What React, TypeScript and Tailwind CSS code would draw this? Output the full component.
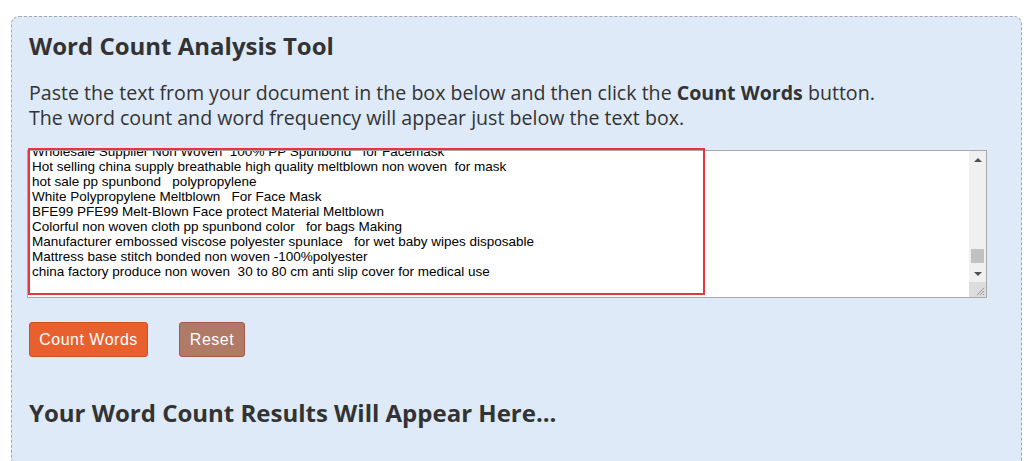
import React from 'react'

const lines = [
  'Wholesale Supplier Non Woven  100% PP Spunbond   for Facemask',
  'Hot selling china supply breathable high quality meltblown non woven  for mask',
  'hot sale pp spunbond   polypropylene',
  'White Polypropylene Meltblown   For Face Mask',
  'BFE99 PFE99 Melt-Blown Face protect Material Meltblown',
  'Colorful non woven cloth pp spunbond color   for bags Making',
  'Manufacturer embossed viscose polyester spunlace   for wet baby wipes disposable',
  'Mattress base stitch bonded non woven -100%polyester',
  'china factory produce non woven  30 to 80 cm anti slip cover for medical use',
]

const heading = "font-['Trebuchet_MS','Open_Sans',sans-serif]"

const FakeScrollbar: React.FC = () => (
  <div className="flex w-[17px] shrink-0 flex-col bg-[#f0f0f0]">
    <div className="flex h-[17px] items-center justify-center">
      <div className="h-0 w-0 border-x-[4px] border-b-[4px] border-x-transparent border-b-[#505050]" />
    </div>
    <div className="flex flex-1 flex-col justify-end px-[2px] pb-[2px]">
      <div className="h-[14px] bg-[#c1c1c1]" />
    </div>
    <div className="flex h-[17px] items-center justify-center">
      <div className="h-0 w-0 border-x-[4px] border-t-[4px] border-x-transparent border-t-[#505050]" />
    </div>
    <div className="relative h-[15px] bg-[#dcdcdc]">
      <svg className="absolute bottom-[1px] right-[1px]" width="10" height="10" viewBox="0 0 10 10">
        <path d="M9 2 L2 9 M9 5 L5 9 M9 8 L8 9" stroke="#9a9a9a" strokeWidth="1" />
      </svg>
    </div>
  </div>
)

export default function App() {
  return (
    <div className="min-h-[461px] overflow-hidden bg-white pl-[11px] pr-[2px] pt-[16px]">
      <div className="h-[460px] rounded-[8px] border border-dashed border-[#a8a8a8] bg-[#deeaf8] pl-[17px] pr-[34px] pt-[11px]">
        <h1 className={`${heading} text-[24px] font-bold leading-[36px] text-[#333]`}>
          Word Count Analysis Tool
        </h1>
        <p className={`${heading} mt-[16px] text-[19.6px] leading-[25px] text-[#333]`}>
          Paste the text from your document in the box below and then click the <b>Count Words</b> button.
          <br />
          The word count and word frequency will appear just below the text box.
        </p>
        <div className="relative ml-[-2px] mt-[20px] flex h-[148px] border border-[#a9a9a9] bg-white">
          <div className="flex-1 overflow-hidden pl-[4px] font-['Liberation_Sans',Arial,sans-serif] text-[13.5px] leading-[15px] text-black">
            <div className="mt-[-7px]">
              {lines.map((l, i) => (
                <div key={i} className="whitespace-pre">{l}</div>
              ))}
            </div>
          </div>
          <FakeScrollbar />
          <div className="pointer-events-none absolute left-0 top-[-3px] h-[147px] w-[677px] border-2 border-[#e8343c]" />
        </div>
        <div className="mt-[24px] flex gap-[31px] font-['Liberation_Sans',Arial,sans-serif]">
          <button className="h-[35px] w-[119px] rounded-[3px] border border-[#cf5025] bg-[#e9602f] text-[16px] tracking-[0.5px] text-white">
            Count Words
          </button>
          <button className="h-[35px] w-[66px] rounded-[3px] border border-[#a45a45] bg-[#b07a67] text-[16px] tracking-[0.5px] text-white">
            Reset
          </button>
        </div>
        <h2 className={`${heading} mt-[38px] text-[24px] font-bold leading-[36px] text-[#333]`}>
          Your Word Count Results Will Appear Here...
        </h2>
      </div>
    </div>
  )
}
